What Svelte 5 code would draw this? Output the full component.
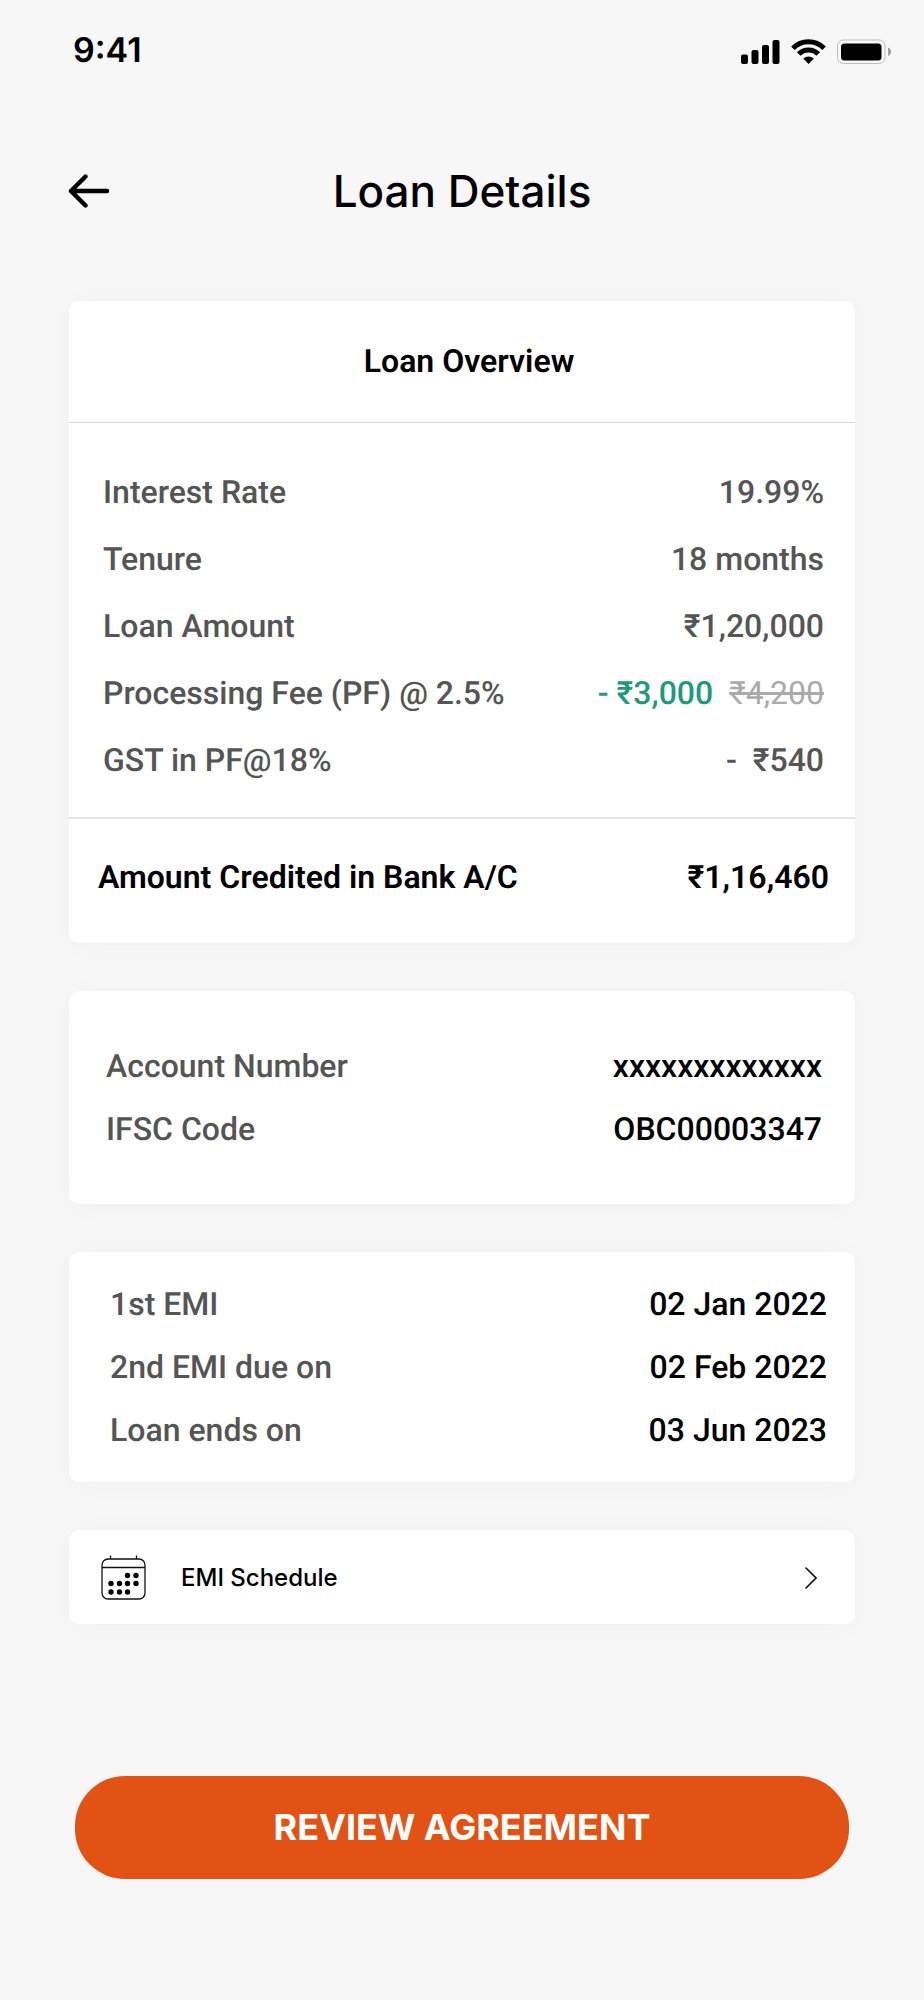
<script lang="ts">
  const loan = [
    { label: 'Interest Rate', value: '19.99%' },
    { label: 'Tenure', value: '18 months' },
    { label: 'Loan Amount', value: '₹1,20,000' },
    { label: 'Processing Fee (PF) @ 2.5%', value: '- ₹3,000', oldValue: '₹4,200' },
    { label: 'GST in PF@18%', value: '-  ₹540' }
  ];

  const account = [
    { label: 'Account Number', value: 'xxxxxxxxxxxxx' },
    { label: 'IFSC Code', value: 'OBC00003347' }
  ];

  const emi = [
    { label: '1st EMI', value: '02 Jan 2022' },
    { label: '2nd EMI due on', value: '02 Feb 2022' },
    { label: 'Loan ends on', value: '03 Jun 2023' }
  ];

  // Marked days in the calendar icon
  const days = [
    [26.5, 20.5], [35, 20.5],
    [10, 28.5], [18.5, 28.5], [26.5, 28.5], [35, 28.5],
    [10, 37], [18.5, 37], [26.5, 37]
  ];
</script>

<div class="screen">
  <div class="status-bar">
    <span class="time">9:41</span>
    <div class="indicators">
      <svg width="39" height="25" viewBox="0 0 39 25" aria-hidden="true">
        <rect x="0" y="15.5" width="7" height="9.5" rx="2" />
        <rect x="10.5" y="11" width="7" height="14" rx="2" />
        <rect x="21" y="6" width="7" height="19" rx="2" />
        <rect x="31.5" y="1" width="7" height="24" rx="2" />
      </svg>
      <svg width="35" height="25" viewBox="0 0 35 25" aria-hidden="true">
        <g fill="none" stroke="#000" stroke-width="5">
          <path d="M1.9 9.2A22 22 0 0 1 33.1 9.2" />
          <path d="M7.7 15A13.8 13.8 0 0 1 27.3 15" />
        </g>
        <path d="M17.5 25L12.2 19.4Q17.5 15.6 22.8 19.4Z" />
      </svg>
      <svg width="55" height="25" viewBox="0 0 55 25" aria-hidden="true">
        <rect x="0.5" y="1" width="47.5" height="23.5" rx="6" fill="none" stroke="#bdbdbd" />
        <rect x="4" y="4.5" width="40.5" height="17" rx="3.5" />
        <path d="M51 8.5C55.2 10 55.2 15.5 51 17Z" fill="#a0a0a0" />
      </svg>
    </div>
  </div>

  <header class="header">
    <button class="back" aria-label="Back">
      <svg width="42" height="34" viewBox="0 0 42 34" aria-hidden="true">
        <path d="M17.5 2.5L3 17L17.5 31.5M3 17H39" fill="none" stroke="#000" stroke-width="4.4" stroke-linecap="round" stroke-linejoin="round" />
      </svg>
    </button>
    <h1>Loan Details</h1>
  </header>

  <main>
    <section class="card">
      <h2>Loan Overview</h2>
      <dl class="rows overview">
        {#each loan as row}
          <div class="row">
            <dt>{row.label}</dt>
            {#if row.oldValue}
              <dd class="discount"><ins>{row.value}</ins><del>{row.oldValue}</del></dd>
            {:else}
              <dd>{row.value}</dd>
            {/if}
          </div>
        {/each}
      </dl>
      <div class="row total">
        <span>Amount Credited in Bank A/C</span>
        <span>₹1,16,460</span>
      </div>
    </section>

    <section class="card">
      <dl class="rows account">
        {#each account as row}
          <div class="row">
            <dt>{row.label}</dt>
            <dd>{row.value}</dd>
          </div>
        {/each}
      </dl>
    </section>

    <section class="card">
      <dl class="rows emi">
        {#each emi as row}
          <div class="row">
            <dt>{row.label}</dt>
            <dd>{row.value}</dd>
          </div>
        {/each}
      </dl>
    </section>

    <button class="card schedule">
      <svg width="45" height="45" viewBox="0 0 45 45" aria-hidden="true">
        <g fill="none" stroke="#111" stroke-width="1.3">
          <rect x="1" y="4" width="43" height="40" rx="6" />
          <path d="M1 12.5H44M9.5 0.5V4M35.5 0.5V4" />
        </g>
        {#each days as [cx, cy]}
          <circle {cx} {cy} r="2.7" />
        {/each}
      </svg>
      <span>EMI Schedule</span>
      <svg width="12" height="22" viewBox="0 0 12 22" aria-hidden="true">
        <path d="M1 1L11 11L1 21" fill="none" stroke="#111" stroke-width="1.6" stroke-linecap="round" />
      </svg>
    </button>
  </main>

  <button class="review">REVIEW AGREEMENT</button>
</div>

<style>
  :global(body) {
    margin: 0;
    background: #f7f7f7;
  }

  .screen {
    color: #000;
    font-family: Roboto, "Liberation Sans", sans-serif;
    text-rendering: geometricPrecision;
    padding-bottom: 120px;
  }

  button {
    border: none;
    cursor: pointer;
    font-family: Inter, "Liberation Sans", sans-serif;
    color: #000;
  }

  svg {
    display: block;
    flex-shrink: 0;
  }

  .status-bar {
    display: flex;
    align-items: center;
    justify-content: space-between;
    padding: 32px 32px 0 73px;
  }

  .time {
    font-family: Inter, "Liberation Sans", sans-serif;
    font-size: 34px;
    line-height: 38px;
    font-weight: 600;
  }

  .indicators {
    display: flex;
    gap: 11px;
  }

  .header {
    display: grid;
    grid-template-columns: 1fr auto 1fr;
    align-items: center;
    padding: 93px 68px 0;
  }

  .back {
    justify-self: start;
    padding: 0;
    background: none;
  }

  h1 {
    margin: 0;
    font-family: Inter, "Liberation Sans", sans-serif;
    font-size: 44px;
    line-height: 56px;
    font-weight: 500;
  }

  main {
    display: flex;
    flex-direction: column;
    gap: 48px;
    padding: 82px 69px 0;
  }

  .card {
    background: #fff;
    border-radius: 10px;
    box-shadow: 0 2px 30px rgba(0, 0, 0, 0.03);
  }

  h2 {
    margin: 0;
    padding: 41px 0 42px 14px;
    border-bottom: 1px solid #d8d8d8;
    font-size: 32px;
    line-height: 38px;
    font-weight: 600;
    text-align: center;
  }

  .rows {
    display: flex;
    flex-direction: column;
    margin: 0;
  }

  .row {
    display: flex;
    justify-content: space-between;
    font-size: 32px;
    line-height: 38px;
    font-weight: 500;
  }

  dt {
    color: #555;
  }

  dd {
    margin: 0;
    white-space: pre;
  }

  .overview {
    gap: 29px;
    padding: 50px 31px 38px 34px;
  }

  .overview dd {
    color: #555;
  }

  .overview .discount {
    display: flex;
    gap: 16px;
  }

  ins {
    color: #1f9a7b;
    text-decoration: none;
  }

  del {
    color: #aaa;
    font-weight: 400;
  }

  .total {
    padding: 39px 26px 47px 29px;
    border-top: 2px solid #e6e6e6;
    font-weight: 600;
  }

  .account {
    gap: 25px;
    padding: 56px 33px 56px 37px;
  }

  .emi {
    gap: 25px;
    padding: 33px 28px 33px 41px;
  }

  .schedule {
    display: flex;
    align-items: center;
    padding: 25px 38px 24px 32px;
    text-align: left;
  }

  .schedule span {
    flex: 1;
    margin-left: 35px;
    font-size: 24px;
    line-height: 32px;
    font-weight: 500;
  }

  .review {
    display: block;
    width: calc(100% - 150px);
    margin: 152px auto 0;
    padding: 31px 24px 32px;
    border-radius: 50px;
    background: #e25214;
    color: #fff;
    font-size: 36px;
    line-height: 40px;
    font-weight: 700;
  }
</style>
